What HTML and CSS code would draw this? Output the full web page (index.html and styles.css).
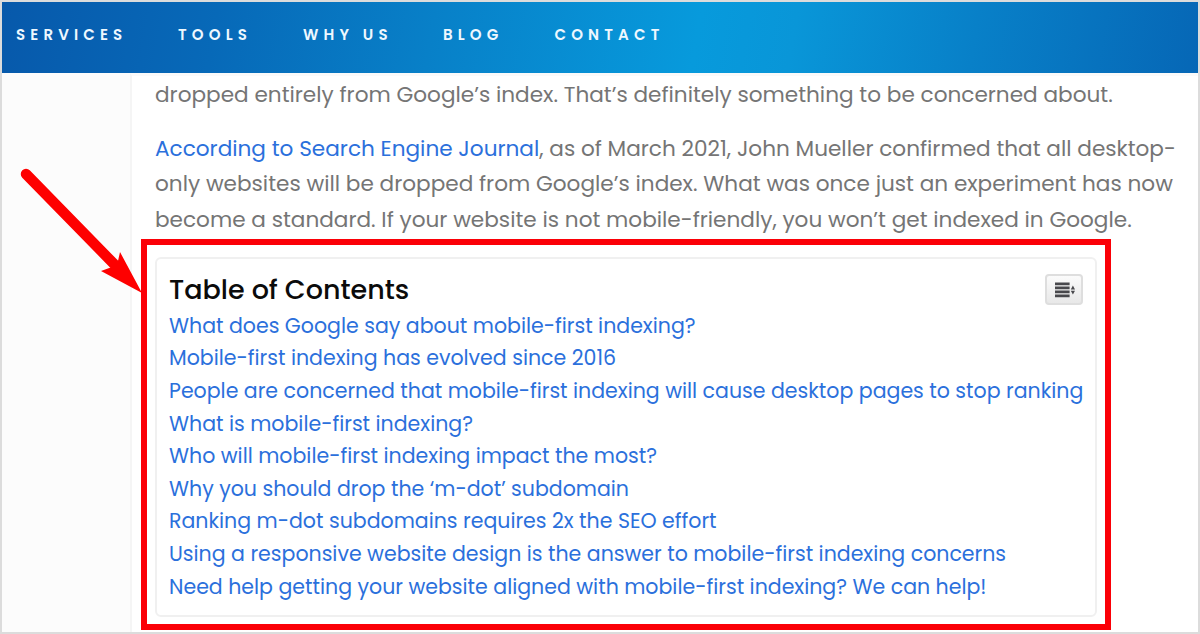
FILE: index.html
```
<!DOCTYPE html>
<html lang="en">

<head>
    <meta charset="utf-8">
    <title>Mobile-First Indexing</title>
    <link rel="stylesheet" href="styles.css">
</head>

<body>
    <div id="page">
        <header>
            <nav>
                <a class="services">SERVICES</a>
                <a class="tools">TOOLS</a>
                <a class="why">WHY US</a>
                <a class="blog">BLOG</a>
                <a>CONTACT</a>
            </nav>
        </header>

        <main>
            <article>
                <p>dropped entirely from Google’s index. That’s definitely something to be concerned about.</p>
                <p>
                    <a>According to Search Engine Journal</a>, as of March 2021, John Mueller confirmed that all desktop-<br>
                    only websites will be dropped from Google’s index. What was once just an experiment has now<br>
                    become a standard. If your website is not mobile-friendly, you won’t get indexed in Google.
                </p>

                <section id="toc">
                    <div class="toc-header">
                        <h2>Table of Contents</h2>
                        <button class="toggle" aria-label="Toggle contents">
                            <svg width="24" height="18" viewBox="0 0 24 18">
                                <path d="M3 2.9h14.6M3 6.9h14.6M3 10.9h14.6M3 14.9h14.6" stroke="#48484c" stroke-width="2.6" />
                                <path d="M18.8 8.4l2.1-3.8 2.1 3.8zM18.8 9.8h4.2l-2.1 3.8z" fill="#48484c" />
                            </svg>
                        </button>
                    </div>
                    <ul>
                        <li><a>What does Google say about mobile-first indexing?</a></li>
                        <li><a>Mobile-first indexing has evolved since 2016</a></li>
                        <li><a>People are concerned that mobile-first indexing will cause desktop pages to stop ranking</a></li>
                        <li><a>What is mobile-first indexing?</a></li>
                        <li><a>Who will mobile-first indexing impact the most?</a></li>
                        <li><a>Why you should drop the ‘m-dot’ subdomain</a></li>
                        <li><a>Ranking m-dot subdomains requires 2x the SEO effort</a></li>
                        <li><a>Using a responsive website design is the answer to mobile-first indexing concerns</a></li>
                        <li><a>Need help getting your website aligned with mobile-first indexing? We can help!</a></li>
                    </ul>
                </section>
            </article>
        </main>

        <!-- Callout over the contents box -->
        <div class="highlight"></div>
        <svg class="arrow" width="150" height="140" viewBox="0 0 150 140">
            <path d="M26 14L114 104" stroke="#fe0000" stroke-width="10.5" stroke-linecap="round" />
            <path d="M142 133L101 111L112 107L118 101L120 92Z" fill="#fe0000" />
        </svg>
    </div>
</body>

</html>
```
FILE: styles.css
```
* {
    box-sizing: border-box;
}

body {
    margin: 0;
    font-family: Poppins, Inter, sans-serif;
    background-color: #fff;
}

#page {
    position: relative;
    height: 634px;
    border: 2px solid #dcdcdc;
    overflow: hidden;
}

/* Navigation */
header {
    height: 71px;
    padding-left: 14px;
    background: linear-gradient(100deg, #0759ab 0%, #0769b8 18%, #0880c8 36%, #079adc 58%, #0996d8 66%, #0880c8 81%, #0667b6 100%);
}

nav {
    display: flex;
    height: 65px;
    align-items: center;
}

nav a {
    color: #eef8ff;
    font-size: 15px;
    font-weight: 600;
    letter-spacing: 5.15px;
    white-space: nowrap;
}

.services {
    width: 162px;
}

.tools {
    width: 125px;
}

.why {
    width: 140px;
}

.blog {
    width: 111.5px;
}

/* Article */
main {
    height: 560px;
    padding-left: 128px;
    background-color: #fcfcfc;
}

article {
    height: 100%;
    padding: 1px 0 0 23px;
    border-left: 2px solid #f5f5f5;
    border-top: 3px solid #fafafa;
    background-color: #fff;
}

p {
    margin: 0 0 18px;
    color: #757575;
    font-size: 21.6px;
    line-height: 35.7px;
    white-space: nowrap;
}

p a,
li a {
    color: #2b70dc;
}

/* Table of contents */
#toc {
    width: 942px;
    height: 360px;
    margin-top: 19px;
    padding: 13px 12px 0;
    border: 2px solid #f0f0f0;
    border-radius: 6px;
}

.toc-header {
    display: flex;
    justify-content: space-between;
    align-items: center;
    height: 36px;
}

h2 {
    margin: 0;
    color: #0b0b0b;
    font-size: 27px;
    font-weight: 500;
}

.toggle {
    display: flex;
    justify-content: center;
    align-items: center;
    width: 38px;
    height: 31px;
    padding: 0;
    border: 2px solid #dedede;
    border-radius: 4px;
    background: linear-gradient(#fbfbfb, #e8e8e8);
}

ul {
    margin: 2px 0 0;
    padding: 0;
    list-style: none;
    font-size: 20.52px;
    line-height: 32.6px;
    white-space: nowrap;
}

/* Callout */
.highlight {
    position: absolute;
    left: 139px;
    top: 237px;
    width: 970px;
    height: 391px;
    border: 6px solid #fb0007;
}

.arrow {
    position: absolute;
    left: -2px;
    top: 158px;
}
```
